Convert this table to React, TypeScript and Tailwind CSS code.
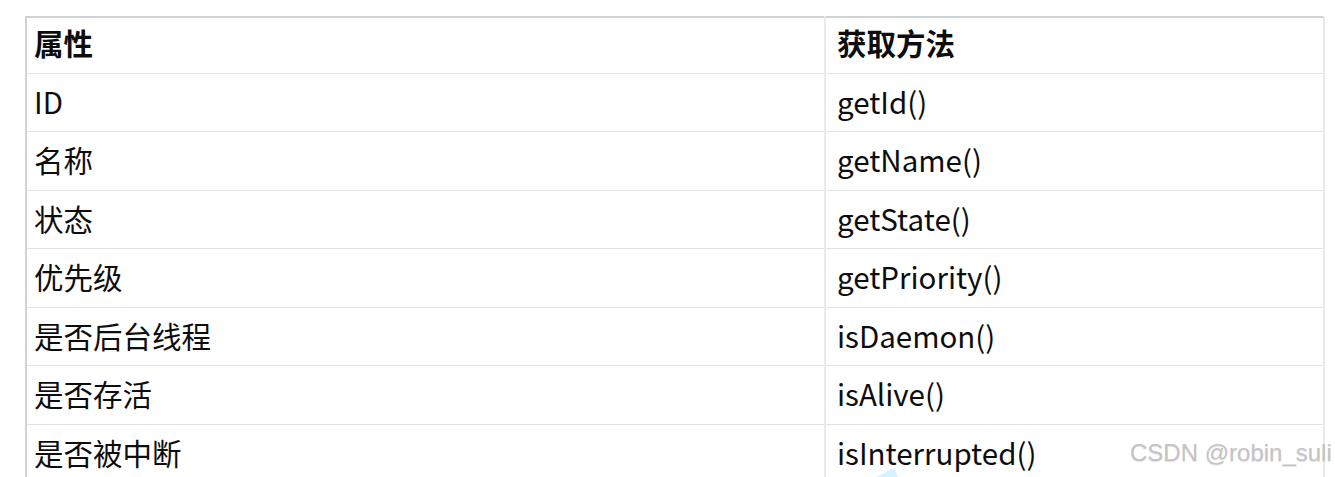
import React from "react";

const rows = [
  { name: "ID", method: "getId()" },
  { name: "名称", method: "getName()" },
  { name: "状态", method: "getState()" },
  { name: "优先级", method: "getPriority()" },
  { name: "是否后台线程", method: "isDaemon()" },
  { name: "是否存活", method: "isAlive()" },
  { name: "是否被中断", method: "isInterrupted()" },
];

const font = "font-['Noto_Sans_CJK_SC','Noto_Sans',sans-serif]";

export default function App() {
  return (
    <div className={`relative h-[477px] w-[1335px] overflow-hidden bg-white pt-4 pl-[25px] ${font}`}>
      <table className="w-[1298px] table-fixed border-collapse text-[29.5px] text-[#0d0d0d]">
        <colgroup>
          <col className="w-[799px]" />
          <col className="w-[499px]" />
        </colgroup>
        <thead>
          <tr className="h-[56px] border-t-2 border-[#cfd2d5]">
            <th className="border-l-2 border-b border-[#cfd2d5] border-b-[#e1e4e7] pl-[7px] pb-[5px] text-left align-middle font-bold leading-none">
              属性
            </th>
            <th className="border-x-2 border-b border-x-[#e8eaec] border-b-[#e1e4e7] pl-[11px] pb-[5px] text-left align-middle font-bold leading-none">
              获取方法
            </th>
          </tr>
        </thead>
        <tbody>
          {rows.map((r) => (
            <tr key={r.name} className="h-[58.5px]">
              <td className="border-l-2 border-b border-l-[#cfd2d5] border-b-[#e1e4e7] pl-[7px] pb-[2px] align-middle leading-none">
                {r.name}
              </td>
              <td className="border-x-2 border-b border-x-[#e8eaec] border-b-[#e1e4e7] pl-[11px] pb-[2px] align-middle leading-none">
                {r.method}
              </td>
            </tr>
          ))}
        </tbody>
      </table>

      <div className="absolute left-[1130px] top-[441px] whitespace-nowrap font-['Liberation_Sans',Arial,sans-serif] text-[24px] leading-none text-[#c4c4c4] [text-shadow:0_1px_1px_rgba(0,0,0,0.12)]">
        CSDN @robin_suli
      </div>

      <svg className="absolute left-[876px] top-[467px]" width="22" height="10" viewBox="0 0 22 10">
        <path d="M0 10 L18 1 L22 10 Z" fill="#d6f1ff" />
      </svg>
    </div>
  );
}
